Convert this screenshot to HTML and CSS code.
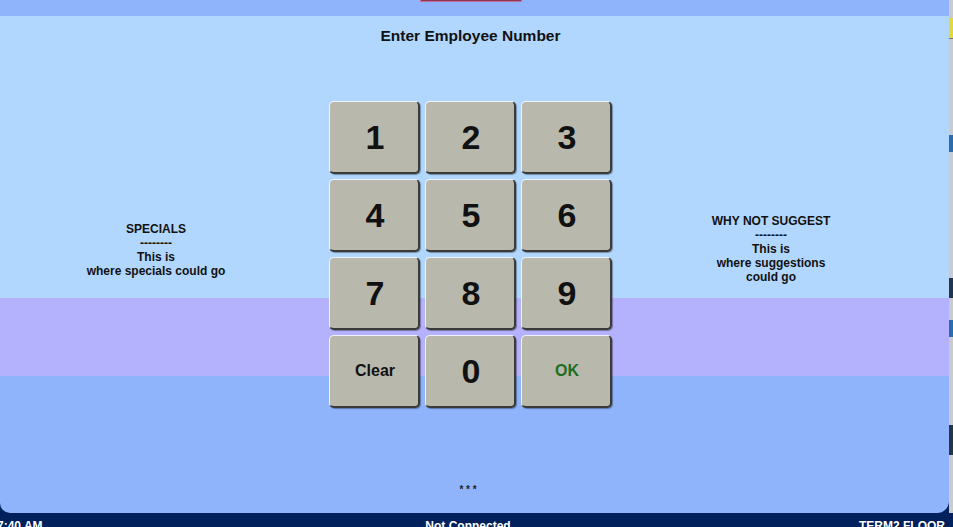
FILE: index.html
```html
<!DOCTYPE html>
<html>
<head>
<meta charset="utf-8">
<link rel="stylesheet" href="styles.css">
</head>
<body>
<div class="screen">
  <div class="upper">
    <div class="panel">
      <div class="topstrip"><div class="redbar"></div></div>
      <div class="title">Enter Employee Number</div>
      <div class="row">
        <div class="side side-left">
          <div>SPECIALS</div>
          <div>--------</div>
          <div>This is</div>
          <div>where specials could go</div>
        </div>
        <div class="keypad">
          <div class="key">1</div>
          <div class="key">2</div>
          <div class="key">3</div>
          <div class="key">4</div>
          <div class="key">5</div>
          <div class="key">6</div>
          <div class="key">7</div>
          <div class="key">8</div>
          <div class="key">9</div>
          <div class="key key-word">Clear</div>
          <div class="key">0</div>
          <div class="key key-word key-ok">OK</div>
        </div>
        <div class="side side-right">
          <div>WHY NOT SUGGEST</div>
          <div>--------</div>
          <div>This is</div>
          <div>where suggestions</div>
          <div>could go</div>
        </div>
      </div>
      <div class="stars">* * *</div>
    </div>
    <div class="edge">
      <div class="edge-gap g1"></div>
      <div class="edge-yellow"></div>
      <div class="edge-gap g2"></div>
      <div class="edge-blue"></div>
      <div class="edge-gap g3"></div>
      <div class="edge-dark"></div>
      <div class="edge-gap g4"></div>
      <div class="edge-blue"></div>
      <div class="edge-gap g5"></div>
      <div class="edge-dark edge-dark2"></div>
    </div>
  </div>
  <div class="footer">
    <span class="f-left">7:40 AM</span>
    <span class="f-mid">Not Connected</span>
    <span class="f-right">TERM2 FLOOR</span>
  </div>
</div>
</body>
</html>
```
FILE: styles.css
```css
html, body {
  margin: 0;
  padding: 0;
}
body {
  width: 953px;
  height: 527px;
  overflow: hidden;
  background: #00215b;
  font-family: "Liberation Sans", Arial, sans-serif;
}
.screen {
  display: flex;
  flex-direction: column;
  width: 953px;
  height: 527px;
}
.upper {
  display: flex;
  height: 513px;
}
.panel {
  width: 949px;
  height: 513px;
  display: flex;
  flex-direction: column;
  border-radius: 0 0 12px 10px;
  background: linear-gradient(to bottom,
    #8fb4fb 0px, #8fb4fb 16px,
    #b2d7fe 16px, #b2d7fe 298px,
    #b5b2fd 298px, #b5b2fd 376px,
    #8fb4fc 376px, #8fb4fc 513px);
}
.topstrip {
  height: 16px;
  display: flex;
  justify-content: center;
  padding-right: 7px;
}
.redbar {
  width: 100px;
  height: 1px;
  background: #8e3457;
  border: 1px solid #c07090;
  border-top: none;
}
.title {
  margin-top: 11px;
  text-align: center;
  font-size: 15.5px;
  line-height: 17px;
  font-weight: bold;
  color: #111;
  padding-right: 8px;
}
.row {
  display: flex;
  margin-top: 57px;
}
.side {
  width: 312px;
  align-self: center;
  margin-bottom: 10px;
  text-align: center;
  font-size: 12px;
  line-height: 14px;
  font-weight: bold;
  color: #111;
}
.side-left {
  margin-right: 17px;
}
.side-right {
  margin-left: 3px;
  margin-bottom: 11px;
}
.keypad {
  display: grid;
  grid-template-columns: repeat(3, 91px);
  grid-auto-rows: 73px;
  column-gap: 5px;
  row-gap: 5px;
}
.key {
  box-sizing: border-box;
  display: flex;
  align-items: center;
  justify-content: center;
  padding-left: 2px;
  background: #b9b8ad;
  border-radius: 5px;
  border-top: 1px solid #eef4ff;
  border-left: 1px solid #eef4ff;
  border-right: 2px solid #3a3a3a;
  border-bottom: 2px solid #3a3a3a;
  box-shadow: 1px 1px 1px rgba(0, 0, 0, 0.35);
  font-size: 34px;
  font-weight: bold;
  color: #111;
}
.key-word {
  font-size: 16px;
}
.key-ok {
  color: #1d6e1d;
}
.stars {
  margin-top: auto;
  margin-bottom: 17px;
  text-align: center;
  font-size: 10px;
  line-height: 12px;
  font-weight: bold;
  color: #222;
  padding-right: 13px;
}
.edge {
  width: 4px;
  display: flex;
  flex-direction: column;
  background: #c9cbd0;
}
.g1 { height: 18px; }
.edge-yellow { height: 20px; background: #e0d840; border-bottom: 1px solid #777; }
.g2 { height: 96px; }
.edge-blue { height: 17px; background: #2a6cb0; }
.g3 { height: 126px; }
.edge-dark { height: 20px; background: #24344c; }
.g4 { height: 22px; }
.g5 { height: 88px; }
.edge-dark2 { height: 30px; }
.footer {
  height: 14px;
  box-sizing: border-box;
  padding-top: 6px;
  display: flex;
  justify-content: space-between;
  font-size: 12px;
  line-height: 14px;
  font-weight: bold;
  color: #ffffff;
  overflow: hidden;
  white-space: nowrap;
}
.f-left {
  margin-left: -3px;
  width: 200px;
}
.f-mid {
  flex: 1;
  text-align: center;
  padding-right: 6px;
}
.f-right {
  width: 200px;
  text-align: right;
  margin-right: 8px;
}
```
